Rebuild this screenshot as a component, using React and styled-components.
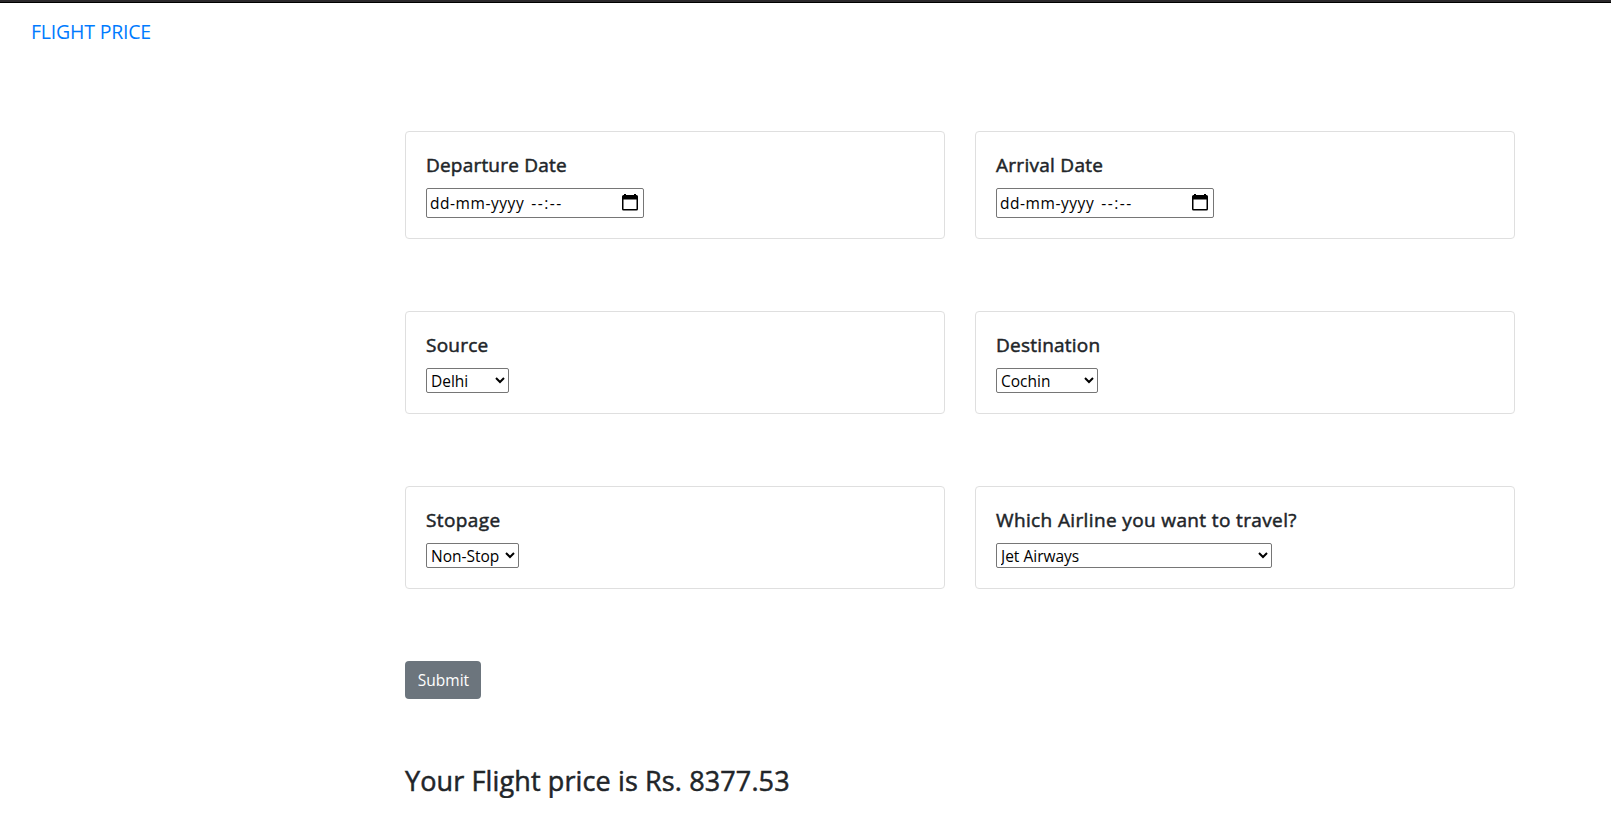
import React from "react";
import styled, { createGlobalStyle } from "styled-components";

const GlobalStyle = createGlobalStyle`
  *, *::before, *::after { box-sizing: border-box; }
  body {
    margin: 0;
    background: #fff;
    color: #212529;
    font: 400 16px/1.5 "Segoe UI", "Open Sans", "Noto Sans", sans-serif;
  }
`;

const TopEdge = styled.div`
  height: 3px;
  background: #2b292b;
  border-bottom: 1px solid #000;
`;

const Navbar = styled.nav`
  display: flex;
  align-items: center;
  height: 58px;
  padding: 0 31px;
`;

const Brand = styled.a`
  color: #007bff;
  font-size: 19.5px;
  line-height: 30px;
  letter-spacing: -0.2px;
  text-decoration: none;
  white-space: nowrap;
`;

const Form = styled.form`
  width: 1110px;
  margin: 70px 0 0 405px;
`;

const Grid = styled.div`
  display: grid;
  grid-template-columns: 540px 540px;
  gap: 72px 30px;
`;

const Card = styled.section`
  display: flex;
  flex-direction: column;
  align-items: flex-start;
  padding: 20px;
  border: 1px solid #dfdfdf;
  border-radius: 4px;
`;

const CardTitle = styled.h5`
  margin: 0 0 9px;
  font-size: 19px;
  line-height: 27px;
  font-weight: 400;
  letter-spacing: ${(p) => p.$spacing}px;
  -webkit-text-stroke: 0.5px currentColor;
  white-space: nowrap;
`;

const DateField = styled.div`
  display: flex;
  align-items: center;
  width: 218px;
  height: 30px;
  padding: 0 5px 0 3px;
  border: 1px solid #767676;
  border-radius: 2px;
  color: #000;
  font-size: 15.5px;

  svg {
    margin-left: auto;
  }
`;

const DatePart = styled.span`
  padding-top: 2px;
  letter-spacing: 0.55px;
`;

const TimePart = styled.span`
  padding: 2px 0 0 7px;
  letter-spacing: 1.5px;
`;

const Select = styled.select`
  width: ${(p) => p.$width}px;
  height: 25px;
  margin: 0;
  padding: 0;
  border: 1px solid #767676;
  border-radius: 2px;
  background: #fff;
  color: #000;
  font: 400 15.5px "Segoe UI", "Open Sans", "Noto Sans", sans-serif;
`;

const Submit = styled.button`
  width: 76px;
  height: 38px;
  margin: 72px 0 0;
  padding: 0 0 0 1px;
  display: block;
  border: 0;
  border-radius: 4px;
  background: #6c757d;
  color: #fff;
  font: 400 15.5px/38px "Segoe UI", "Open Sans", "Noto Sans", sans-serif;
`;

const Result = styled.h3`
  margin: 65px 0 0;
  font-size: 27px;
  line-height: 34px;
  font-weight: 400;
  letter-spacing: 0.12px;
  -webkit-text-stroke: 0.5px currentColor;
  white-space: nowrap;
`;

const CalendarIcon = () => (
  <svg width="16" height="18" viewBox="0 0 16 18" aria-hidden="true">
    <path
      fill="#000"
      fillRule="evenodd"
      d="M2 0h2v1h8V0h2v1h.5A1.5 1.5 0 0 1 16 2.500V15A1.500 1.500 0 0 1 14.500 16.500H1.500A1.500 1.500 0 0 1 0 15V2.500A1.500 1.500 0 0 1 1.500 1H2ZM1.500 5.500v9.500h13V5.500Z"
    />
  </svg>
);

const fields = [
  { title: "Departure Date", spacing: 0.2, date: true },
  { title: "Arrival Date", spacing: 0.28, date: true },
  { title: "Source", spacing: 0.25, value: "Delhi", width: 83 },
  { title: "Destination", spacing: 0.22, value: "Cochin", width: 102 },
  { title: "Stopage", spacing: 0.4, value: "Non-Stop", width: 93 },
  {
    title: "Which Airline you want to travel?",
    spacing: 0.37,
    value: "Jet Airways",
    width: 276,
  },
];

export default function App() {
  return (
    <>
      <GlobalStyle />
      <TopEdge />
      <Navbar>
        <Brand>FLIGHT PRICE</Brand>
      </Navbar>
      <Form>
        <Grid>
          {fields.map((f) => (
            <Card key={f.title}>
              <CardTitle $spacing={f.spacing}>{f.title}</CardTitle>
              {f.date ? (
                <DateField>
                  <DatePart>dd-mm-yyyy</DatePart>
                  <TimePart>--:--</TimePart>
                  <CalendarIcon />
                </DateField>
              ) : (
                <Select $width={f.width} defaultValue={f.value}>
                  <option>{f.value}</option>
                </Select>
              )}
            </Card>
          ))}
        </Grid>
        <Submit type="button">Submit</Submit>
        <Result>Your Flight price is Rs. 8377.53</Result>
      </Form>
    </>
  );
}
